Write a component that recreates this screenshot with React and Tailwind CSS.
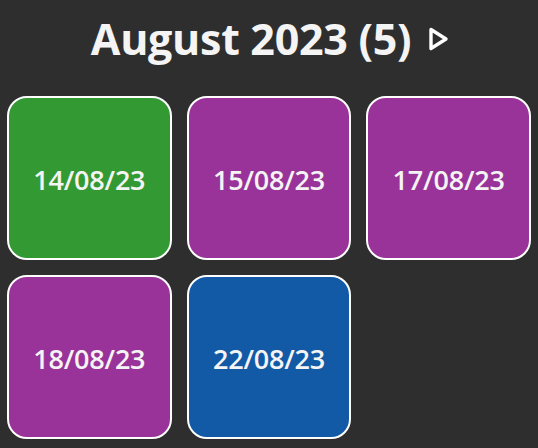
export default function App() {
  const tiles = [
    { d: "14/08/23", c: "bg-[#339933]" },
    { d: "15/08/23", c: "bg-[#993399]" },
    { d: "17/08/23", c: "bg-[#993399]" },
    { d: "18/08/23", c: "bg-[#993399]" },
    { d: "22/08/23", c: "bg-[#1259a6]" },
  ];
  return (
    <div
      className="w-[538px] h-[448px] bg-[#2e2e2e] text-white overflow-hidden"
      style={{ fontFamily: '"Open Sans", "Noto Sans", sans-serif' }}
    >
      <div className="h-[96px] flex items-center justify-center gap-[16px] pb-[20px] pl-[2px]">
        <span className="text-[43px] leading-none font-bold tracking-[-0.3px] text-[#f4f4f4]">August 2023 (5)</span>
        <svg width="22" height="24" viewBox="0 0 22 24" className="mt-[2px]">
          <path d="M4 2.5 L19 12 L4 21.5 Z" fill="none" stroke="white" strokeWidth="3.4" strokeLinejoin="round" />
        </svg>
      </div>
      <div className="grid grid-cols-3 gap-[15px] px-[7px]">
        {tiles.map((t) => (
          <div
            key={t.d}
            className={`${t.c} h-[164px] rounded-[20px] border-2 border-white flex items-center justify-center text-[27px] font-semibold tracking-[-0.2px] text-[#f4f4f4] pt-[4px]`}
          >
            {t.d}
          </div>
        ))}
      </div>
    </div>
  );
}
